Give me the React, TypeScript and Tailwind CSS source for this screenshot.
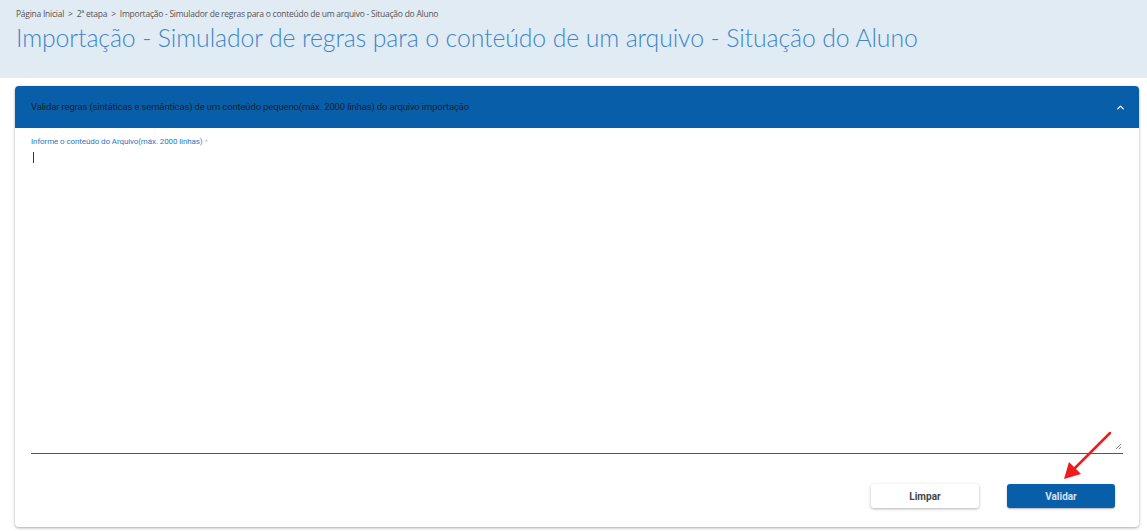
import { ChevronUp } from "lucide-react"

export default function App() {
  return (
    <div className="min-h-[531px] w-[1147px] bg-white font-['Roboto',sans-serif]">
      {/* Page heading */}
      <div className="h-[78px] bg-[#e1ebf4] px-4 pt-[8px]">
        <nav className="flex items-center gap-[4px] text-[8.5px] text-[#555] font-['Open_Sans',sans-serif] tracking-[-0.25px]">
          <span>Página Inicial</span>
          <span>&gt;</span>
          <span>2ª etapa</span>
          <span>&gt;</span>
          <span>Importação - Simulador de regras para o conteúdo de um arquivo - Situação do Aluno</span>
        </nav>
        <h1 className="mt-[2px] font-['Lato',sans-serif] text-[24.8px] font-light leading-[30px] text-[#3d86c8] tracking-[-0.1px]">
          Importação - Simulador de regras para o conteúdo de um arquivo - Situação do Aluno
        </h1>
      </div>

      {/* Card */}
      <div className="ml-[15px] mr-[8px] mt-[8px] flex h-[441px] flex-col rounded-sm bg-white shadow-[0_1px_3px_rgba(0,0,0,0.35)]">
        <div className="flex h-[42px] items-center justify-between rounded-t-sm bg-[#085ea9] pl-4 pr-[13px]">
          <span className="text-[9.5px] text-[#1b1f2a] tracking-[-0.15px]">
            Validar regras (sintáticas e semânticas) de um conteúdo pequeno(máx. 2000 linhas) do arquivo importação
          </span>
          <ChevronUp className="h-[11px] w-[11px] text-white" strokeWidth={3} />
        </div>

        <div className="flex flex-1 flex-col px-4 pt-[8px]">
          <label className="text-[8px] text-[#2a78c2] tracking-[-0.1px]">
            Informe o conteúdo do Arquivo(máx. 2000 linhas) <span className="text-[#ccc]">*</span>
          </label>
          <div className="relative mt-[4px] h-[302px] border-b border-[#1565b8]">
            <div className="ml-[2px] h-[11px] w-px bg-[#333]" />
            <svg className="absolute bottom-[3px] right-[1px]" width="7" height="7" viewBox="0 0 7 7">
              <path d="M1 6 L6 1 M4 6 L6 4" stroke="#666" strokeWidth="0.8" fill="none" />
            </svg>
          </div>

          <div className="mt-[30px] flex justify-end gap-[28px] pr-[8px]">
            <button className="h-[24px] w-[108px] rounded-[3px] bg-white text-[10px] font-bold text-[#444] shadow-[0_1px_3px_rgba(0,0,0,0.3)]">
              Limpar
            </button>
            <button className="h-[24px] w-[108px] rounded-[3px] bg-[#085ea9] text-[10px] font-bold text-[#d6e2ef] shadow-[0_1px_2px_rgba(0,0,0,0.3)]">
              Validar
            </button>
          </div>
        </div>
      </div>

      {/* Annotation arrow */}
      <svg className="pointer-events-none absolute left-0 top-0" width="1147" height="531">
        <line x1="1110" y1="433" x2="1072" y2="471" stroke="#ee1c1c" strokeWidth="2.5" strokeLinecap="round" />
        <polygon points="1064,479 1069,462 1081,474" fill="#ee1c1c" />
      </svg>
    </div>
  )
}
